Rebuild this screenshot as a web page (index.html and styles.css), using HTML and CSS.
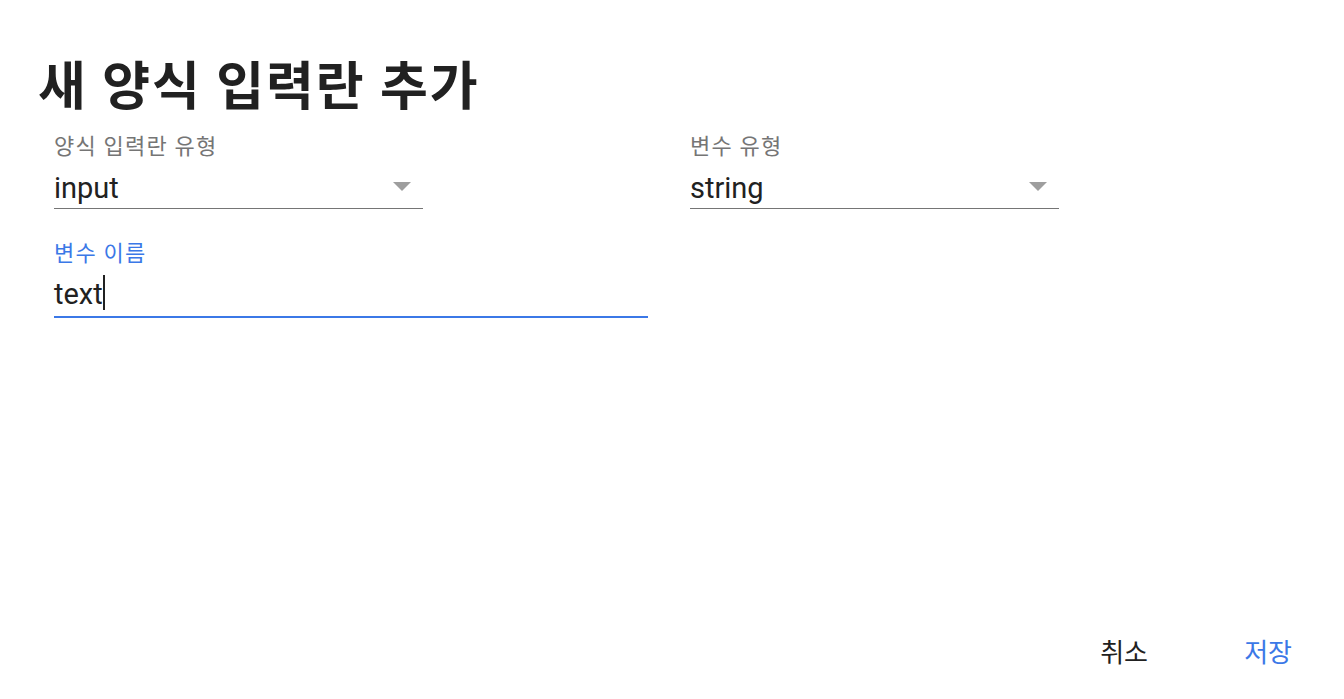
FILE: index.html
```html
<!DOCTYPE html>
<html lang="ko">
<head>
<meta charset="utf-8">
<link rel="stylesheet" href="styles.css">
</head>
<body>
<div class="dialog">
  <h1 class="title">새 양식 입력란 추가</h1>
  <div class="form">
    <div class="row">
      <div class="field select-field">
        <label class="label">양식 입력란 유형</label>
        <div class="control">
          <span class="value">input</span>
          <span class="arrow"></span>
        </div>
      </div>
      <div class="field select-field">
        <label class="label">변수 유형</label>
        <div class="control">
          <span class="value">string</span>
          <span class="arrow"></span>
        </div>
      </div>
    </div>
    <div class="row">
      <div class="field text-field focused">
        <label class="label">변수 이름</label>
        <div class="control">
          <span class="value">text</span><span class="caret"></span>
        </div>
      </div>
    </div>
  </div>
  <div class="actions">
    <button class="btn">취소</button>
    <button class="btn primary">저장</button>
  </div>
</div>
</body>
</html>
```
FILE: styles.css
```css
* { box-sizing: border-box; }
html, body { margin: 0; padding: 0; background: #fff; }
body {
  font-family: Roboto, "Noto Sans CJK KR", sans-serif;
  color: #212121;
}
.dialog {
  height: 699px;
  display: flex;
  flex-direction: column;
  padding: 52px 0 0 38px;
}
.title {
  margin: 0;
  font-size: 52px;
  font-weight: 700;
  line-height: 72px;
  color: #212121;
  letter-spacing: 1.8px;
}
.form {
  padding-left: 16px;
  display: flex;
  flex-direction: column;
  gap: 30px;
  margin-top: 8px;
}
.row {
  display: flex;
  gap: 267px;
}
.field { display: flex; flex-direction: column; }
.select-field { width: 369px; }
.text-field { width: 594px; }
.label {
  font-size: 22px;
  line-height: 29px;
  letter-spacing: 1.2px;
  color: #757575;
}
.control {
  display: flex;
  align-items: flex-end;
  height: 48px;
  border-bottom: 1px solid #757575;
}
.value {
  font-size: 29px;
  line-height: 34px;
  padding-bottom: 3px;
  color: #212121;
}
.arrow {
  margin-left: auto;
  margin-right: 12px;
  margin-bottom: 17px;
  width: 0; height: 0;
  border-left: 9px solid transparent;
  border-right: 9px solid transparent;
  border-top: 9px solid #9e9e9e;
}
.focused .label { color: #3b78e7; }
.focused .control {
  height: 50px;
  border-bottom: 2px solid #3b78e7;
}
.focused .value { padding-bottom: 5px; }
.caret {
  width: 2px;
  height: 35px;
  margin-bottom: 6px;
  background: #212121;
}
.actions {
  margin-top: auto;
  display: flex;
  justify-content: flex-end;
  padding: 0 52px 25px 0;
}
.btn {
  background: none;
  border: 0;
  font-family: "Noto Sans CJK KR", Roboto, sans-serif;
  font-size: 26px;
  color: #212121;
  padding: 0;
  width: 144px;
  height: 48px;
  text-align: right;
  cursor: pointer;
}
.btn.primary { color: #3b78e7; }
```
